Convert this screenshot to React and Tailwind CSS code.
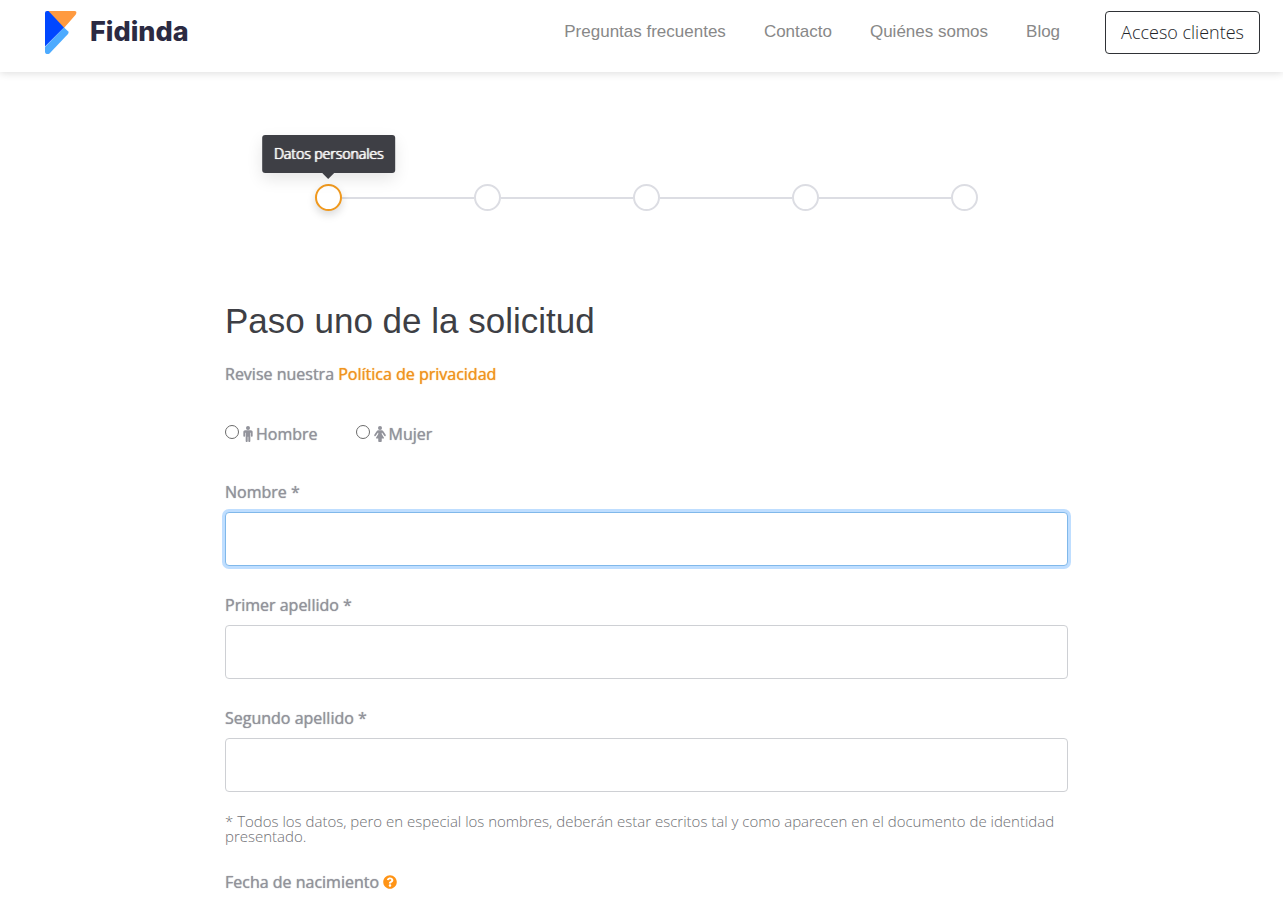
import { FaQuestionCircle } from "react-icons/fa";

const navLinks = ["Preguntas frecuentes", "Contacto", "Quiénes somos", "Blog"];

const steps = [
  "Datos personales",
  "Datos de contacto",
  "Datos laborales",
  "Datos bancarios",
  "Confirmación",
];

function MaleIcon() {
  return (
    <svg viewBox="0 160 1024 1760" className="mb-px h-4 w-[10px]" fill="currentColor" aria-hidden="true">
      <path d="M1024 832v416q0 40-28 68t-68 28-68-28-28-68v-352h-64v912q0 46-33 79t-79 33-79-33-33-79v-464h-64v464q0 46-33 79t-79 33-79-33-33-79v-912h-64v352q0 40-28 68t-68 28-68-28-28-68v-416q0-80 56-136t136-56h640q80 0 136 56t56 136z" />
      <circle cx="512" cy="384" r="224" />
    </svg>
  );
}

function FemaleIcon() {
  return (
    <svg viewBox="0 160 1280 1760" className="mb-px h-4 w-3" fill="currentColor" aria-hidden="true">
      <path d="M1280 1184q0 40-28 68t-68 28q-51 0-80-43l-227-341h-45v132l247 411q9 15 9 33 0 26-19 45t-45 19h-192v272q0 46-33 79t-79 33h-160q-46 0-79-33t-33-79v-272h-192q-26 0-45-19t-19-45q0-18 9-33l247-411v-132h-45l-227 341q-29 43-80 43-40 0-68-28t-28-68q0-29 16-53l256-384q73-107 176-107h384q103 0 176 107l256 384q16 24 16 53z" />
      <circle cx="640" cy="384" r="224" />
    </svg>
  );
}

function Logo() {
  return (
    <a href="#inicio" className="flex items-center gap-[13px]">
      <svg viewBox="0 -1 32 45" className="h-[45px] w-8" aria-hidden="true">
        <path d="M0 36 L19 16.5 L23 20.3 Q24.3 21.6 23 23 L4.5 42.4 Q3.2 43.4 1.6 43 Q0 42.6 0 41 Z" fill="#4dabff" />
        <path d="M2.5 0 H29.5 Q31.8 0 31.3 2 Q31.2 3 30.4 4 L19 17 L2.5 0 Z" fill="#ff9a40" />
        <path d="M0 2 Q0 0 2 0 H3.5 L19 16.5 L0 35.5 Z" fill="#0047ff" />
      </svg>
      <span className="pb-0.5 font-['Inter',sans-serif] text-[27px] leading-10 font-extrabold text-[#2b2a42]">
        Fidinda
      </span>
    </a>
  );
}

function Header() {
  return (
    <header className="bg-white pt-[10px] pr-[23px] pb-[17px] pl-[45px] shadow-[0_1px_8px_rgba(0,0,0,0.14)]">
      <div className="flex items-center justify-between">
        <Logo />
        <nav className="flex items-center gap-[45px]">
          <ul className="flex items-center gap-[38px] pb-0.5 font-['Liberation_Sans',sans-serif] text-[17px] leading-6 text-[#888888]">
            {navLinks.map((label) => (
              <li key={label}>
                <a href="#enlace">{label}</a>
              </li>
            ))}
          </ul>
          <a
            href="#clientes"
            className="rounded border border-[#2f3236] px-[15px] py-2 text-[18px] leading-[25px] font-light text-[#222327]"
          >
            Acceso clientes
          </a>
        </nav>
      </div>
    </header>
  );
}

function Stepper() {
  return (
    <ol className="mx-auto flex w-full max-w-[663px] items-center">
      {steps.map((name, i) => (
        <li key={name} className={i === 0 ? "flex items-center" : "flex flex-1 items-center"}>
          {i > 0 && <span className="h-0.5 flex-1 bg-[#dcdde3]" />}
          <button
            type="button"
            aria-label={name}
            className={
              i === 0
                ? "relative size-[27px] rounded-full border-2 border-[#f0991e] bg-white shadow-[0_4px_8px_rgba(0,0,0,0.15)]"
                : "size-[27px] rounded-full border-2 border-[#dcdde3] bg-white"
            }
          >
            {i === 0 && (
              <span
                role="tooltip"
                className="absolute bottom-9 left-1/2 -translate-x-1/2 rounded-[3px] bg-[#3e3f45] px-3 py-2 text-[14px] leading-[22px] font-light whitespace-nowrap text-white shadow-[0_6px_16px_rgba(0,0,0,0.1)] [text-shadow:1px_0_0_currentColor,0_0_1px_currentColor]"
              >
                {name}
                <svg viewBox="0 0 12 6" className="absolute top-full left-1/2 h-1.5 w-3 -translate-x-1/2" aria-hidden="true">
                  <path d="M0 0 H12 L6 6 Z" fill="#3e3f45" />
                </svg>
              </span>
            )}
          </button>
        </li>
      ))}
    </ol>
  );
}

function Field({ id, label, focused }) {
  return (
    <div className="flex flex-col gap-2">
      <label htmlFor={id} className="text-[16px] leading-6 font-normal text-[#92939b] [text-shadow:0_0_1px_currentColor]">
        {label}
      </label>
      <input
        id={id}
        type="text"
        className={
          focused
            ? "h-[54px] w-full rounded border border-[#80b8ea] bg-white px-4 shadow-[0_0_0_3px_#bfdeff] outline-none"
            : "h-[54px] w-full rounded border border-[#ced0d4] bg-white px-4 outline-none"
        }
      />
    </div>
  );
}

function GenderOption({ id, label, icon }) {
  return (
    <div className="flex items-center">
      <input
        id={id}
        type="radio"
        name="genero"
        className="mr-1 mb-1 size-3.5 appearance-none rounded-full border border-[#6b6b6b] bg-white checked:border-4 checked:border-[#f0991e]"
      />
      <label htmlFor={id} className="flex items-center gap-[3px]">
        {icon}
        {label}
      </label>
    </div>
  );
}

export default function App() {
  return (
    <div className="min-h-screen bg-white font-['Open_Sans',sans-serif] text-[#92939b]">
      <Header />
      <main className="pt-28 pr-4 pl-[26px]">
        <div className="mx-auto w-full max-w-[843px]">
          <Stepper />
          <form>
            <h1 className="mt-[87px] font-['Liberation_Sans',sans-serif] text-[35px] leading-[46px] text-[#3e3f45]">
              Paso uno de la solicitud
            </h1>
            <p className="mt-[18px] text-[16px] leading-6 font-normal [text-shadow:0_0_1px_currentColor]">
              Revise nuestra{" "}
              <a href="#privacidad" className="text-[#f0941e] [text-shadow:0_0_1px_currentColor]">
                Política de privacidad
              </a>
            </p>
            <div className="mt-9 flex gap-[38px] text-[16px] leading-6 font-normal [text-shadow:0_0_1px_currentColor]">
              <GenderOption id="hombre" label="Hombre" icon={<MaleIcon />} />
              <GenderOption id="mujer" label="Mujer" icon={<FemaleIcon />} />
            </div>
            <div className="mt-[34px] flex flex-col gap-[27px]">
              <Field id="nombre" label="Nombre *" focused />
              <Field id="apellido1" label="Primer apellido *" />
              <Field id="apellido2" label="Segundo apellido *" />
            </div>
            <p className="mt-[22px] text-[15px] leading-[15px] font-light text-[#6f7074]">
              * Todos los datos, pero en especial los nombres, deberán estar escritos tal y como aparecen en el
              documento de identidad presentado.
            </p>
            <p className="mt-[26px] flex items-center gap-1 text-[16px] leading-6 font-normal [text-shadow:0_0_1px_currentColor]">
              Fecha de nacimiento
              <FaQuestionCircle className="size-3.5 text-[#ff9416]" />
            </p>
          </form>
        </div>
      </main>
    </div>
  );
}
